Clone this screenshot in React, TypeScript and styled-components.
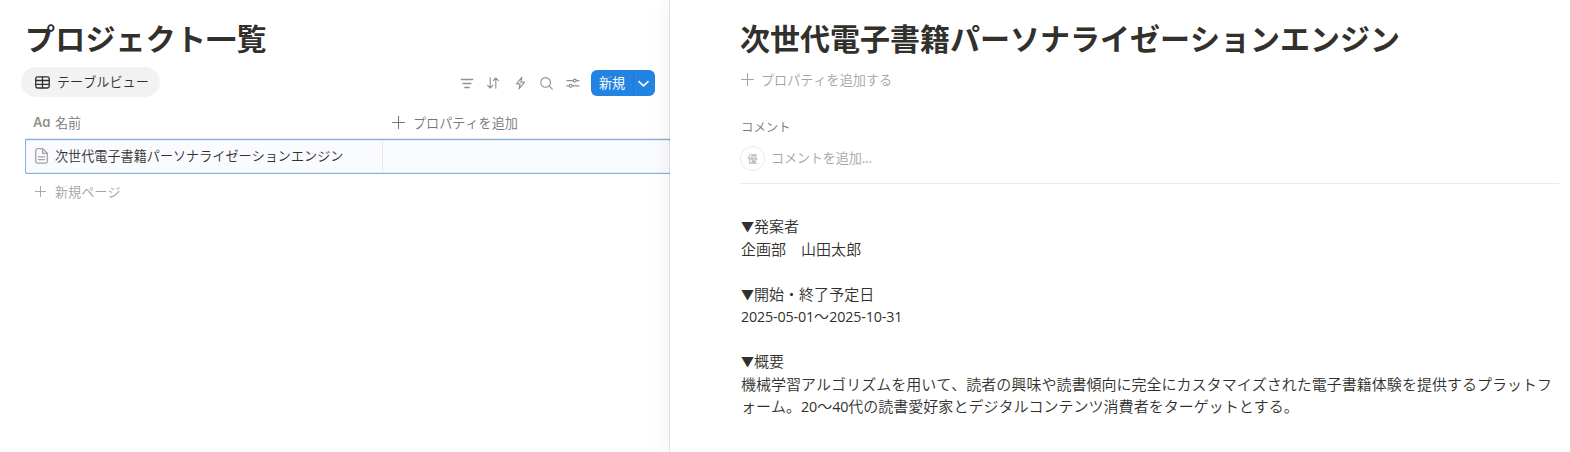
import React from 'react';

import styled, { createGlobalStyle } from 'styled-components';

const Colors = {
  text: '#32302c',
  muted: '#787774',
  icon: '#91918e',
  faint: '#a5a4a1',
  blue: '#2383e2',
  selection: '#7eb0e4',
  line: '#e9e9e7',
};

const PARAGRAPHS = [
  ['発案者', '企画部　山田太郎'],
  ['開始・終了予定日', '2025-05-01〜2025-10-31'],
  [
    '概要',
    '機械学習アルゴリズムを用いて、読者の興味や読書傾向に完全にカスタマイズされた電子書籍体験を提供するプラットフォーム。20〜40代の読書愛好家とデジタルコンテンツ消費者をターゲットとする。',
  ],
];

const PlusIcon = ({ size = 13 }: { size?: number }): JSX.Element => (
  <StyledIcon width={size} height={size} viewBox="0 0 13 13">
    <path d="M6.5 0.5v12M0.5 6.5h12" />
  </StyledIcon>
);

const Toolbar = (): JSX.Element => (
  <StyledToolbar>
    <StyledIcon width="14" height="14" viewBox="0 0 14 14" $strokeWidth={1.3}>
      <path d="M1.3 3.5h11.4M3 7.5h8M4.8 11.5h4.4" />
    </StyledIcon>
    <StyledIcon width="14" height="14" viewBox="0 0 14 14">
      <path d="M4.2 1.8v10M1.6 9.3l2.6 2.7 2.6-2.7M9.8 12.2v-10M7.2 4.7L9.8 2l2.6 2.7" />
    </StyledIcon>
    <StyledIcon width="14" height="14" viewBox="0 0 14 14">
      <path d="M9 1.2L3.5 7.9h3.6l-1.1 4.9L11.5 6.1H7.9z" />
    </StyledIcon>
    <StyledIcon width="14" height="14" viewBox="0 0 14 14">
      <circle cx="6.6" cy="6.4" r="4.8" />
      <path d="M10.1 9.9l3.2 3.2" />
    </StyledIcon>
    <StyledIcon width="14" height="14" viewBox="0 0 14 14" $strokeWidth={1.2}>
      <path d="M0.8 4.6h6.4M10.4 4.6h2.6M0.8 9.8h2.3M6.3 9.8h6.7" />
      <circle cx="8.8" cy="4.6" r="1.5" />
      <circle cx="4.7" cy="9.8" r="1.5" />
    </StyledIcon>
    <StyledNewButton>
      <StyledNewLabel>新規</StyledNewLabel>
      <StyledNewArrow>
        <StyledIcon width="11" height="11" viewBox="0 0 11 11" $strokeWidth={1.5}>
          <path d="M1 3.6l4.5 4.3L10 3.6" />
        </StyledIcon>
      </StyledNewArrow>
    </StyledNewButton>
  </StyledToolbar>
);

const Line = ({ text }: { text: string }): JSX.Element => (
  <StyledLine>
    {text
      .split(/([0-9-]+)/)
      .map((part, i) =>
        i % 2 ? <StyledDigits key={i}>{part}</StyledDigits> : part
      )}
  </StyledLine>
);

const App = (): JSX.Element => (
  <>
    <GlobalStyle />
    <StyledPage>
      <StyledDatabase>
        <StyledDatabaseTitle>プロジェクト一覧</StyledDatabaseTitle>
        <StyledViewBar>
          <StyledTab>
            <StyledIcon width="15" height="13" viewBox="0 0 15 13" $strokeWidth={1.3}>
              <rect x="0.8" y="0.8" width="13.4" height="11.2" rx="1.8" />
              <path d="M0.8 4.5h13.4M0.8 8.3h13.4M7.5 0.8v11.2" />
            </StyledIcon>
            <StyledTabLabel>テーブルビュー</StyledTabLabel>
          </StyledTab>
          <Toolbar />
        </StyledViewBar>
        <StyledHeaderRow>
          <StyledNameHeader>
            <StyledAa>Aa</StyledAa>
            名前
          </StyledNameHeader>
          <StyledAddHeader>
            <PlusIcon />
            プロパティを追加
          </StyledAddHeader>
        </StyledHeaderRow>
        <StyledRow>
          <StyledNameCell>
            <StyledPageIcon width="13" height="16" viewBox="0 0 13 16" $strokeWidth={1.3}>
              <path d="M2.3 0.7h5.4l4.6 4.6v8.2a1.7 1.7 0 0 1-1.7 1.7H2.3a1.7 1.7 0 0 1-1.6-1.7V2.4a1.7 1.7 0 0 1 1.6-1.7z" />
              <path d="M7.6 0.9v4.5h4.5M3.4 8.9h6.2M3.4 11.7h6.2" />
            </StyledPageIcon>
            <StyledPageName>
              次世代電子書籍パーソナライゼーションエンジン
            </StyledPageName>
          </StyledNameCell>
        </StyledRow>
        <StyledNewPage>
          <PlusIcon size={11} />
          新規ページ
        </StyledNewPage>
      </StyledDatabase>
      <StyledPeek>
        <StyledPeekTitle>
          次世代電子書籍パーソナライゼーションエンジン
        </StyledPeekTitle>
        <StyledAddProperty>
          <PlusIcon />
          プロパティを追加する
        </StyledAddProperty>
        <StyledComments>
          <StyledCommentsLabel>コメント</StyledCommentsLabel>
          <StyledCommentInput>
            <StyledAvatar>優</StyledAvatar>
            <StyledPlaceholder>コメントを追加...</StyledPlaceholder>
          </StyledCommentInput>
        </StyledComments>
        <StyledContent>
          {PARAGRAPHS.map(([heading, body]) => (
            <StyledBlock key={heading}>
              <StyledLine>
                <StyledMarker>▼</StyledMarker>
                {heading}
              </StyledLine>
              <Line text={body} />
            </StyledBlock>
          ))}
        </StyledContent>
      </StyledPeek>
    </StyledPage>
  </>
);

const GlobalStyle = createGlobalStyle`
  * {
    box-sizing: border-box;
  }

  body {
    background: #fff;
    color: ${Colors.text};
    font-family: 'Noto Sans CJK JP', sans-serif;
    font-kerning: none;
    font-size: 13.125px;
    font-weight: 350;
    margin: 0;
    overflow: hidden;
  }
`;

const StyledPage = styled.div`
  display: flex;
  height: 452px;
  width: 1570px;
`;

const StyledDatabase = styled.section`
  flex: none;
  padding: 19px 0 0 25px;
  width: 670px;
`;

const StyledPeek = styled.section`
  background: #fff;
  box-shadow: 0 0 0 1px rgba(15, 15, 15, 0.09), 0 0 22px rgba(15, 15, 15, 0.07);
  flex: 1;
  min-width: 0;
  padding: 19px 11px 0 71px;
`;

const StyledTitle = styled.h1`
  font-size: 30px;
  font-weight: 700;
  line-height: 36px;
  margin: 0;
  white-space: nowrap;
`;

const StyledDatabaseTitle = styled(StyledTitle)`
  letter-spacing: 0.2px;
`;

const StyledPeekTitle = styled(StyledTitle)`
  margin-left: -1px;
`;

const StyledIcon = styled.svg<{ $strokeWidth?: number }>`
  fill: none;
  flex: none;
  stroke: currentColor;
  stroke-linecap: round;
  stroke-linejoin: round;
  stroke-width: ${({ $strokeWidth = 1.1 }) => $strokeWidth};
`;

const StyledViewBar = styled.div`
  align-items: center;
  display: flex;
  height: 30px;
  justify-content: space-between;
  margin: 12px 15px 0 -4px;
`;

const StyledTab = styled.div`
  align-items: center;
  background: #f2f2f2;
  border-radius: 15px;
  display: flex;
  gap: 7px;
  height: 30px;
  padding: 0 11px 0 14px;
`;

const StyledTabLabel = styled.span`
  padding-bottom: 1px;
`;

const StyledToolbar = styled.div`
  align-items: center;
  color: ${Colors.icon};
  display: flex;
  gap: 12.4px;
  padding-top: 2px;
`;

const StyledNewButton = styled.div`
  background: ${Colors.blue};
  border-radius: 6px;
  color: #fff;
  display: flex;
  height: 26px;
  margin-left: -1px;
  width: 64px;
`;

const StyledNewLabel = styled.span`
  font-weight: 400;
  line-height: 26px;
  text-align: center;
  width: 42px;
`;

const StyledNewArrow = styled.span`
  align-items: center;
  border-left: 1px solid #1f76cc;
  display: flex;
  flex: 1;
  justify-content: center;
  padding-right: 2px;
`;

const StyledHeaderRow = styled.div`
  border-bottom: 1px solid ${Colors.line};
  color: ${Colors.muted};
  display: flex;
  height: 32px;
  line-height: 31px;
  margin-top: 10px;
`;

const StyledNameHeader = styled.div`
  display: flex;
  padding-left: 8px;
  width: 357px;
`;

const StyledAa = styled.span`
  color: ${Colors.icon};
  font-family: Inter, sans-serif;
  font-feature-settings: 'cv11';
  font-size: 13px;
  font-weight: 600;
  letter-spacing: -0.3px;
  width: 22px;
`;

const StyledAddHeader = styled.div`
  align-items: center;
  display: flex;
  gap: 8px;
  padding-left: 10px;
`;

const StyledRow = styled.div`
  background: #f9fbfe;
  border: 1px solid ${Colors.selection};
  border-radius: 2px 0 0 2px;
  border-right: 0;
  box-shadow: inset 0 1px #e3effb, inset 0 -1px #e3effb;
  display: flex;
  height: 35px;
`;

const StyledNameCell = styled.div`
  align-items: center;
  border-right: 1px solid ${Colors.line};
  display: flex;
  gap: 7px;
  padding-left: 9px;
  white-space: nowrap;
  width: 357px;
`;

const StyledPageIcon = styled(StyledIcon)`
  color: ${Colors.faint};
  margin-bottom: 1px;
`;

const StyledPageName = styled.span`
  padding-bottom: 2px;
`;

const StyledNewPage = styled.div`
  align-items: center;
  color: ${Colors.faint};
  display: flex;
  gap: 9px;
  height: 34px;
  padding-left: 10px;
`;

const StyledAddProperty = styled.div`
  align-items: center;
  color: ${Colors.faint};
  display: flex;
  gap: 7px;
  height: 26px;
  margin-top: 11px;
`;

const StyledComments = styled.div`
  border-bottom: 1px solid ${Colors.line};
  height: 67px;
  margin-top: 25px;
`;

const StyledCommentsLabel = styled.div`
  color: ${Colors.muted};
  font-size: 12.4px;
  line-height: 20px;
`;

const StyledCommentInput = styled.div`
  align-items: center;
  color: ${Colors.faint};
  display: flex;
  gap: 6px;
  margin: 9px 0 0 -1px;
`;

const StyledAvatar = styled.span`
  border: 1px solid #ececeb;
  border-radius: 50%;
  font-size: 10px;
  height: 25px;
  line-height: 23px;
  text-align: center;
  width: 25px;
`;

const StyledPlaceholder = styled.span`
  letter-spacing: -0.15px;
  padding-bottom: 2px;
`;

const StyledContent = styled.div`
  font-size: 15px;
  letter-spacing: 0.02px;
  padding-top: 31px;
`;

const StyledBlock = styled.div`
  margin-bottom: 22.5px;
`;

const StyledLine = styled.div`
  line-height: 22.5px;
`;

const StyledMarker = styled.span`
  font-size: 13px;
  line-height: 1;
  vertical-align: 1px;
`;

const StyledDigits = styled.span`
  font-family: 'Open Sans', sans-serif;
  font-size: 14.3px;
  font-weight: 400;
  letter-spacing: -0.15px;
  line-height: 1;
`;

export default App;
